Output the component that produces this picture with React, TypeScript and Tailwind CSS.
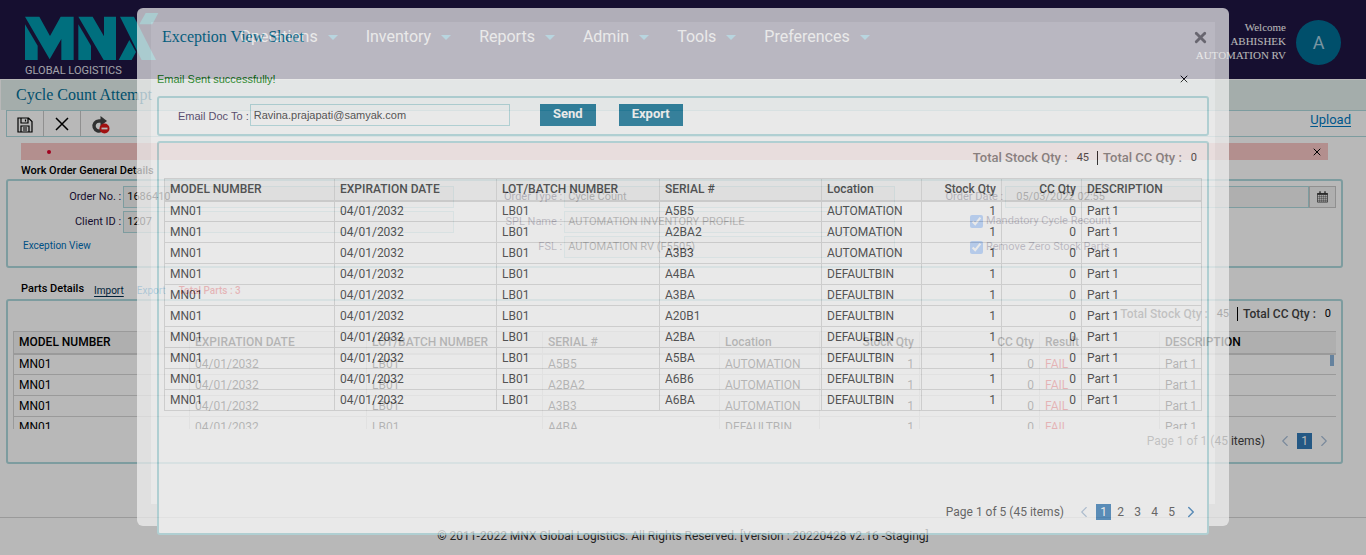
import { ChevronLeft, ChevronRight, X } from "lucide-react";

const roboto = "font-[Roboto,'Liberation_Sans',sans-serif]";
const serif = "font-['Liberation_Serif',serif]";
const arial = "font-['Liberation_Sans',sans-serif]";

type Column = { label: string; width: string; right?: boolean };
type Row = string[];

const menu = ["Operations", "Inventory", "Reports", "Admin", "Tools", "Preferences"];

const partColumns: Column[] = [
  { label: "MODEL NUMBER", width: "w-[176px]" },
  { label: "EXPIRATION DATE", width: "w-[177px]" },
  { label: "LOT/BATCH NUMBER", width: "w-[176px]" },
  { label: "SERIAL #", width: "w-[177px]" },
  { label: "Location", width: "w-[100px]" },
  { label: "Stock Qty", width: "w-[100px]", right: true },
  { label: "CC Qty", width: "w-[120px]", right: true },
  { label: "Result", width: "w-[120px]" },
  { label: "DESCRIPTION", width: "w-[177px]" },
];

const partRows: Row[] = [
  ["A5B5", "AUTOMATION"],
  ["A2BA2", "AUTOMATION"],
  ["A3B3", "AUTOMATION"],
  ["A4BA", "DEFAULTBIN"],
].map(([serial, bin]) => ["MN01", "04/01/2032", "LB01", serial, bin, "1", "0", "FAIL", "Part 1"]);

const exceptionColumns: Column[] = [
  { label: "MODEL NUMBER", width: "w-[170px]" },
  { label: "EXPIRATION DATE", width: "w-[162px]" },
  { label: "LOT/BATCH NUMBER", width: "w-[163px]" },
  { label: "SERIAL #", width: "w-[162px]" },
  { label: "Location", width: "w-[100px]" },
  { label: "Stock Qty", width: "w-[80px]", right: true },
  { label: "CC Qty", width: "w-[80px]", right: true },
  { label: "DESCRIPTION", width: "w-[120px]" },
];

const exceptionRows: Row[] = [
  ["A5B5", "AUTOMATION"],
  ["A2BA2", "AUTOMATION"],
  ["A3B3", "AUTOMATION"],
  ["A4BA", "DEFAULTBIN"],
  ["A3BA", "DEFAULTBIN"],
  ["A20B1", "DEFAULTBIN"],
  ["A2BA", "DEFAULTBIN"],
  ["A5BA", "DEFAULTBIN"],
  ["A6B6", "DEFAULTBIN"],
  ["A6BA", "DEFAULTBIN"],
].map(([serial, bin]) => ["MN01", "04/01/2032", "LB01", serial, bin, "1", "0", "Part 1"]);

function Grid({ columns, rows }: { columns: Column[]; rows: Row[] }) {
  return (
    <table className="w-full table-fixed border-collapse text-xs leading-4">
      <thead>
        <tr className="h-[22px] bg-[#f3f3f3]">
          {columns.map((c) => (
            <th
              key={c.label}
              className={`${c.width} ${c.right ? "text-right" : "text-left"} whitespace-nowrap border border-b-2 border-[#d6d6d6] p-0 px-[5px] font-medium`}
            >
              {c.label}
            </th>
          ))}
        </tr>
      </thead>
      <tbody>
        {rows.map((row, i) => (
          <tr key={i} className="h-[21px]">
            {row.map((cell, j) => (
              <td
                key={j}
                className={`${columns[j].right ? "text-right" : "text-left"} ${cell === "FAIL" ? "text-red-600" : ""} border border-[#d6d6d6] p-0 px-[5px]`}
              >
                {cell}
              </td>
            ))}
          </tr>
        ))}
      </tbody>
    </table>
  );
}

function Totals({ large }: { large?: boolean }) {
  const label = large ? "text-[13px] font-medium text-[#777]" : "text-xs font-medium text-[#444]";
  return (
    <div className="flex items-center text-[11px] leading-4">
      <span className={label}>Total Stock Qty :</span>
      <span className="ml-[9px]">45</span>
      <span className="ml-2 mr-[5px] h-[14px] w-px bg-black" />
      <span className={label}>Total CC Qty :</span>
      <span className="ml-[9px]">0</span>
    </div>
  );
}

function Pager({ label, pages }: { label: string; pages: number }) {
  const numbers = Array.from({ length: pages }, (_, i) => i + 1);
  return (
    <nav className="flex items-center text-xs leading-4 text-[#444]">
      <span>{label}</span>
      <button aria-label="Previous page" className="ml-3 flex w-4 justify-center text-[#a9bfd8]">
        <ChevronLeft size={18} strokeWidth={1.5} className="shrink-0" />
      </button>
      <span className="ml-1 flex gap-[2px]">
        {numbers.map((n) => (
          <button key={n} className={n === 1 ? "h-4 w-[15px] bg-[#337ab7] text-white" : "h-4 w-[15px]"}>
            {n}
          </button>
        ))}
      </span>
      <button
        aria-label="Next page"
        className={pages > 1 ? "ml-1 flex w-4 justify-center text-[#337ab7]" : "ml-1 flex w-4 justify-center text-[#a9bfd8]"}
      >
        <ChevronRight size={18} strokeWidth={pages > 1 ? 2 : 1.5} className="shrink-0" />
      </button>
    </nav>
  );
}

function Field({ id, label, value, date }: { id: string; label: string; value: string; date?: boolean }) {
  return (
    <div className="flex h-[22px] items-center">
      <label htmlFor={id} className="w-1/4 shrink-0 pr-[2px] text-right">
        {label} :
      </label>
      <div className="flex h-full min-w-0 flex-1">
        <input
          id={id}
          readOnly
          defaultValue={value}
          className={`h-full min-w-0 flex-1 border border-[#aed9dd] bg-[#f3f3f3] pb-[2px] text-black ${date ? "pl-[10px]" : "pl-[3px]"}`}
        />
        {date && (
          <button aria-label="Pick a date" className="flex w-[27px] items-center justify-center border border-[#c8c8c8] bg-[#f3f3f3]">
            <svg width="11" height="12" viewBox="0 0 33 36" fill="none" stroke="#333">
              <path d="M1.500 7.500h30v26h-30z" strokeWidth="2" />
              <path d="M1 9h31" strokeWidth="5" />
              <path d="M2 17h29M2 23h29M2 29h29M8 12v21M14 12v21M20 12v21M26 12v21" strokeWidth="1.300" />
              <path d="M9 1v9M24 1v9" strokeWidth="4" />
            </svg>
          </button>
        )}
      </div>
    </div>
  );
}

function Check({ label }: { label: string }) {
  return (
    <label className="ml-[75px] flex h-5 items-center gap-[3px]">
      <input type="checkbox" defaultChecked className="h-[13px] w-[13px] accent-[#0d6efd]" />
      {label}
    </label>
  );
}

function Logo() {
  return (
    <a href="#home" aria-label="MNX Global Logistics" className="ml-[25px] mt-[13px] block w-[135px]">
      <svg width="134" height="47" viewBox="0 0 402 141" fill="#009aaf">
        <path d="M0 11h43l32 58 32-58h39v130h-37V78l-35 61z" />
        <path d="M0 34l38 64v43H0z" />
        <path d="M160 11h43l34 59V11h36v130h-37z" />
        <path d="M160 34l38 64v43h-38z" />
        <path d="M285 11h42l66 130h-43z" />
        <path d="M362 0h38l-18 34h-39z" />
        <path d="M281 141l32-60 20 36-13 24z" />
      </svg>
      <span className="mt-[3px] block whitespace-nowrap text-[11px] leading-4 text-[#e0e0ea]">GLOBAL LOGISTICS</span>
    </a>
  );
}

function MainPage() {
  return (
    <>
      <header className="flex h-[79px] bg-[#1f1543]">
        <Logo />
        <nav className="ml-20 flex h-[74px] items-center gap-7 text-base text-white">
          {menu.map((m) => (
            <a key={m} href={`#${m.toLowerCase()}`} className="flex items-center gap-[10px]">
              {m}
              <svg width="10" height="5" viewBox="0 0 10 5" fill="#1a9ed0">
                <path d="M0 0h10L5 5z" />
              </svg>
            </a>
          ))}
        </nav>
        <div className={`ml-auto mt-5 text-right text-[11px] leading-[14px] text-white ${serif}`}>
          <p>Welcome</p>
          <p>ABHISHEK</p>
          <p>AUTOMATION RV</p>
        </div>
        <div className="ml-[10px] mr-[25px] mt-5 flex h-[45px] w-[45px] items-center justify-center rounded-full bg-[#006e95] text-lg text-[#a9cfe0]">
          A
        </div>
      </header>

      <h1 className={`ml-px mt-px flex h-[30px] items-center bg-[#e3f0ee] pl-[15px] text-base text-[#006e95] ${serif}`}>
        Cycle Count Attempt
      </h1>

      <div className="ml-[6px] flex h-[27px] border border-r-0 border-[#aed9dd] text-black">
        <button aria-label="Save" className="flex w-[37px] items-center justify-center border-r border-[#c8c8c8] pt-[3px]">
          <svg width="16" height="16" viewBox="0 0 16 16" fill="none" stroke="currentColor" strokeWidth="1.200">
            <path d="M1 1h10.500L15 4.500V15H1zM4 1v5h7V1M8.500 2.500v2M4 15V9h8v6M6 11h4M6 13h4" />
          </svg>
        </button>
        <button aria-label="Cancel" className="flex w-[37px] items-center justify-center border-r border-[#c8c8c8]">
          <svg width="14" height="14" viewBox="0 0 14 14" fill="none" stroke="currentColor" strokeWidth="1.500">
            <path d="M1 1l12 12M13 1L1 13" />
          </svg>
        </button>
        <button aria-label="Reset count" className="flex w-[38px] items-center justify-center pt-[2px]">
          <svg width="19" height="18" viewBox="0 0 19 18" fill="none">
            <path d="M10.500 5H8a5 5 0 1 0 3 9" stroke="#444" strokeWidth="3.400" />
            <path d="M9.500 0l6.500 5-6.500 5z" fill="#444" />
            <circle cx="13.500" cy="12.500" r="5" fill="#e01818" />
            <path d="M10.500 12.500h6" stroke="#fff" strokeWidth="1.800" />
          </svg>
        </button>
        <a href="#upload" className="ml-auto mr-[15px] text-[13px] leading-[18px] text-[#007ac2] underline underline-offset-2">
          Upload
        </a>
      </div>

      <div className="ml-[21px] mr-[38px] mt-[6px] flex h-[17px] items-center justify-between bg-[#f9c7c5] pl-[26px] pr-[5px]">
        <span className="h-1 w-1 rounded-full bg-[#e0002a]" />
        <button aria-label="Dismiss errors" className="text-black">
          <X size={12} strokeWidth={2} />
        </button>
      </div>

      <main className="ml-[6px] mr-[23px] text-[11px] leading-4 text-[#1f1543]">
        <h2 className="ml-[15px] mt-[3px] font-medium text-black">Work Order General Details</h2>
        <section className="grid h-[89px] grid-cols-3 rounded-[3px] border-2 border-[#aed9dd] px-[5px] pt-[5px]">
          <div className="flex flex-col gap-[3px]">
            <Field id="order" label="Order No." value="1686410" />
            <Field id="client" label="Client ID" value="1207" />
            <a href="#exceptions" className="ml-[10px] mt-[2px] text-[10px] text-[#0070b8]">
              Exception View
            </a>
          </div>
          <div className="flex flex-col gap-[3px]">
            <Field id="type" label="Order Type" value="Cycle Count" />
            <Field id="spl" label="SPL Name" value="AUTOMATION INVENTORY PROFILE" />
            <Field id="fsl" label="FSL" value="AUTOMATION RV (F5505)" />
          </div>
          <div className="flex flex-col">
            <Field id="date" label="Order Date" value="05/03/2022 02:55" date />
            <div className="mt-[3px] flex flex-col gap-[6px]">
              <Check label="Mandatory Cycle Recount" />
              <Check label="Remove Zero Stock Parts" />
            </div>
          </div>
        </section>

        <div className="ml-[15px] flex h-[31px] items-center pt-[10px]">
          <h2 className="font-medium text-black">Parts Details</h2>
          <div className="ml-[10px] flex gap-[13px] pt-[5px] text-[10px]">
            <a href="#import" className="text-[#003050] underline underline-offset-2">Import</a>
            <a href="#export" className="text-[#0080c8]">Export</a>
            <span className="font-medium text-red-600">Total Parts : 3</span>
          </div>
        </div>

        <section className="h-[165px] rounded-[3px] border-2 border-[#aed9dd] px-[5px] text-black">
          <div className="flex justify-end pb-[9px] pr-[5px] pt-[5px]">
            <Totals />
          </div>
          <div className="relative h-[98px] overflow-hidden">
            <Grid columns={partColumns} rows={partRows} />
            <span className="absolute right-[2px] top-6 h-[11px] w-1 bg-[#8db4dc]" />
          </div>
          <div className="flex justify-end pr-1 pt-[3px]">
            <Pager label="Page 1 of 1 (45 items)" pages={1} />
          </div>
        </section>
      </main>

      <footer className="mt-[53px] border-t border-[#d6d6d6] pt-[10px] text-center text-xs leading-4 text-[#333]">
        © 2011-2022 MNX Global Logistics. All Rights Reserved. [Version : 20220428 v2.16 -Staging]
      </footer>
    </>
  );
}

function ExceptionDialog() {
  return (
    <div
      role="dialog"
      aria-label="Exception View Sheet"
      className="absolute inset-x-0 top-2 mx-auto max-w-[1092px] rounded-md bg-[#f2f2f2] px-[14px] pb-[22px] pt-[14px] text-[#2a2a2a] opacity-70"
    >
      <div className="flow-root bg-white px-[6px]">
        <div className="flex h-[30px] items-center justify-between pl-[5px]">
          <h2 className={`text-base text-[#007fa0] ${serif}`}>Exception View Sheet</h2>
          <button aria-label="Close" className="text-[#8c8c8c]">
            <X size={17} strokeWidth={4} />
          </button>
        </div>
        <div className={`mt-[19px] flex h-4 items-center justify-between pr-[19px] text-[11px] text-[#008000] ${arial}`}>
          <span>Email Sent successfully!</span>
          <button aria-label="Dismiss message" className="text-black">
            <X size={12} strokeWidth={2} />
          </button>
        </div>
        <form className="mt-[9px] flex h-10 items-center rounded-[3px] border-2 border-[#aed9dd] pb-[2px] pl-[19px]">
          <label htmlFor="email" className={`pt-[2px] text-[11px] text-[#2f2150] ${arial}`}>
            Email Doc To :
          </label>
          <input
            id="email"
            type="email"
            defaultValue="Ravina.prajapati@samyak.com"
            className={`ml-px h-[22px] w-[260px] border border-[#aed9dd] pl-[3px] text-[11px] ${arial}`}
          />
          <button type="button" className="ml-[30px] h-[22px] w-14 bg-[#006990] pb-[2px] text-[13px] font-bold leading-5 text-white">
            Send
          </button>
          <button type="button" className="ml-[23px] h-[22px] w-16 bg-[#006990] pb-[2px] text-[13px] font-bold leading-5 text-white">
            Export
          </button>
        </form>
        <section className="-mb-[31px] mt-[5px] flex h-[394px] flex-col rounded-[3px] border-2 border-[#aed9dd] bg-white px-[5px] pb-3">
          <div className="flex justify-end pb-3 pr-[5px] pt-[7px]">
            <Totals large />
          </div>
          <Grid columns={exceptionColumns} rows={exceptionRows} />
          <div className="mt-auto flex justify-end pr-[3px]">
            <Pager label="Page 1 of 5 (45 items)" pages={5} />
          </div>
        </section>
      </div>
    </div>
  );
}

export default function App() {
  return (
    <div className={`relative min-h-screen overflow-hidden bg-white ${roboto}`}>
      <MainPage />
      <div className="absolute inset-0 bg-black/28" />
      <ExceptionDialog />
    </div>
  );
}
